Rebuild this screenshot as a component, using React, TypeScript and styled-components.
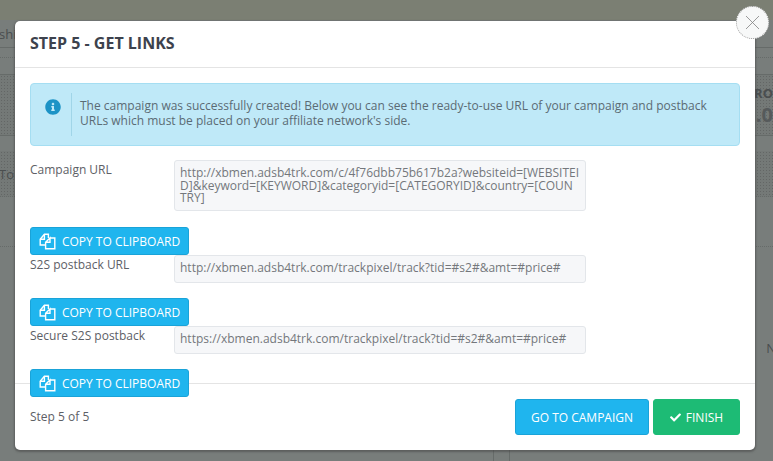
import { FaCheck, FaInfoCircle } from "react-icons/fa";
import styled, { createGlobalStyle } from "styled-components";

const GlobalStyle = createGlobalStyle`
	html, body {
		margin: 0;
		padding: 0;
		width: 773px;
		height: 461px;
		overflow: hidden;
		font-family: "Open Sans", "Liberation Sans", sans-serif;
	}
	* {
		box-sizing: border-box;
	}
`;

const Page = styled.div`
	position: relative;
	width: 773px;
	height: 461px;
	overflow: hidden;
	background: #787d7b;
`;

const Backdrop = styled.div`
	display: flex;
	flex-direction: column;
	height: 100%;
`;

const Band = styled.div<{ $h: number; $bg?: string; $line?: string; $dots?: boolean }>`
	flex: 0 0 ${(p) => p.$h}px;
	display: flex;
	justify-content: space-between;
	align-items: center;
	background-color: ${(p) => p.$bg || "transparent"};
	background-image: ${(p) => (p.$dots ? "radial-gradient(rgba(60, 60, 60, 0.3) 0.6px, transparent 0.8px)" : "none")};
	background-size: 3px 3px;
	border-bottom: ${(p) => (p.$line ? `1px ${p.$line} #666b69` : "none")};
	color: #4a4e4f;
	font-size: 13px;
	overflow: hidden;
`;

const BackText = styled.span<{ $left?: number | string; $right?: number }>`
	margin-left: ${(p) => (typeof p.$left === "string" ? p.$left : `${p.$left || 0}px`)};
	margin-right: ${(p) => p.$right || 0}px;
	white-space: nowrap;
`;

const BackStat = styled.div`
	margin-left: auto;
	padding-bottom: 2px;
	display: flex;
	flex-direction: column;
	align-items: flex-end;
	font-weight: 700;
	line-height: 22px;
	font-size: 13px;
`;

const BackValue = styled.span`
	font-size: 20px;
	color: #565a5b;
`;

const BottomRules = styled.div`
	flex: 1;
	width: 17px;
	margin-left: 493px;
	border-left: 1px solid #666b69;
	border-right: 1px solid #666b69;
`;

const Modal = styled.div`
	position: absolute;
	left: 15px;
	top: 21px;
	width: 740px;
	height: 429px;
	display: flex;
	flex-direction: column;
	background: #fff;
	border-radius: 5px;
	box-shadow: 0 1px 2px 1px rgba(70, 70, 70, 0.55);
`;

const Header = styled.div`
	flex: 0 0 47px;
	display: flex;
	align-items: center;
	padding: 0 15px 2px;
	border-bottom: 1px solid #e4e4e4;
`;

const Title = styled.h4`
	margin: 0;
	font-size: 16px;
	font-weight: 700;
	color: #3d424d;
	text-transform: uppercase;
`;

const CloseButton = styled.div`
	position: absolute;
	right: -14px;
	top: -15px;
	width: 33px;
	height: 33px;
	display: flex;
	align-items: center;
	justify-content: center;
	background: #f7f8f8;
	border: 1px dotted #9a9a9a;
	border-radius: 50%;
`;

const Body = styled.div`
	flex: 0 0 315px;
	min-height: 0;
	padding: 15px 15px 0;
	color: #5d6066;
	font-size: 12px;
`;

const Alert = styled.div`
	display: flex;
	align-items: stretch;
	height: 63px;
	margin-bottom: 14px;
	padding: 9px 0 9px 14px;
	background: #bfe9f8;
	border: 1px solid #a5def2;
	border-radius: 4px;
	color: #5b6b74;
`;

const AlertIcon = styled.div`
	flex: 0 0 27px;
	color: #1c93c6;
	font-size: 16px;
	line-height: 0;
	padding-top: 6px;
	border-right: 1px solid #a0d5e8;
`;

const AlertText = styled.div`
	padding: 5px 0 0 8px;
	line-height: 15px;
	white-space: nowrap;
`;

const Row = styled.div<{ $gap: number }>`
	display: flex;
	margin-bottom: ${(p) => p.$gap}px;
`;

const Label = styled.label`
	flex: 0 0 144px;
	padding-top: 1px;
	line-height: 18px;
`;

const Field = styled.div<{ $h: number }>`
	width: 412px;
	height: ${(p) => p.$h}px;
	padding: 6px 5px 0;
	background: #f6f7f9;
	border: 1px solid #e3e6ea;
	border-radius: 3px;
	color: #74777c;
	line-height: 12.5px;
	white-space: pre-line;
`;

const BlueButton = styled.button`
	display: inline-flex;
	align-items: center;
	justify-content: center;
	border: 1px solid #1aa3d8;
	border-radius: 3px;
	background: #1fb5ee;
	color: #fff;
	font-family: inherit;
	font-size: 12px;
	padding: 0;
`;

const CopyButton = styled(BlueButton)`
	position: relative;
	width: 159px;
	height: 28px;
	gap: 6px;
	vertical-align: top;
`;

const Footer = styled.div`
	flex: 1;
	display: flex;
	align-items: center;
	justify-content: space-between;
	padding: 0 15px;
	border-top: 1px solid #e4e4e4;
	color: #5d6066;
	font-size: 12px;
`;

const StepText = styled.span`
	padding-bottom: 2px;
`;

const FooterButtons = styled.div`
	display: flex;
	gap: 4px;
`;

const CampaignButton = styled(BlueButton)`
	width: 134px;
	height: 36px;
`;

const FinishButton = styled(BlueButton)`
	width: 87px;
	height: 36px;
	gap: 5px;
	background: #1dbb75;
	border-color: #1dbb75;
`;

function CopyIcon() {
	return (
		<svg width="17" height="17" viewBox="0 0 17 17" fill="none" stroke="#fff" strokeWidth="1.4">
			<path d="M6.5 12H1.2V6.2L5.4 1.2H9.4V5" />
			<path d="M5.4 1.6V6.2H1.4" />
			<path d="M11 5H15.8V15.8H6.6V9.2L11 5V9.2H6.6" />
		</svg>
	);
}

function CloseIcon() {
	return (
		<svg width="15" height="15" viewBox="0 0 15 15" stroke="#808080" strokeWidth="0.8">
			<path d="M1 1L14 14M14 1L1 14" />
		</svg>
	);
}

const fields = [
	{
		label: "Campaign URL",
		value:
			"http://xbmen.adsb4trk.com/c/4f76dbb75b617b2a?websiteid=[WEBSITEI\nD]&keyword=[KEYWORD]&categoryid=[CATEGORYID]&country=[COUN\nTRY]",
		height: 51,
		gap: 16,
	},
	{
		label: "S2S postback URL",
		value: "http://xbmen.adsb4trk.com/trackpixel/track?tid=#s2#&amt=#price#",
		height: 28,
		gap: 15,
	},
	{
		label: "Secure S2S postback",
		value: "https://xbmen.adsb4trk.com/trackpixel/track?tid=#s2#&amt=#price#",
		height: 28,
		gap: 15,
	},
];

function App() {
	return (
		<Page>
			<GlobalStyle />
			<Backdrop>
				<Band $h={20} $bg="#7b7f73" />
				<Band $h={28} $line="solid">
					<BackText $left={-1}>shi</BackText>
				</Band>
				<Band $h={10} $line="dotted" />
				<Band $h={17} $line="solid" />
				<Band $h={61} $bg="#747977" $dots $line="solid">
					<BackStat>
						<span>RO</span>
						<BackValue>.0</BackValue>
					</BackStat>
				</Band>
				<Band $h={15} />
				<Band $h={46} $bg="#747977" $dots $line="dotted">
					<BackText $left={-1}>To</BackText>
				</Band>
				<Band $h={50} $line="dotted" />
				<Band $h={202}>
					<BackText $left="auto" $right={-3}>
						N
					</BackText>
				</Band>
				<BottomRules />
			</Backdrop>
			<Modal>
				<Header>
					<Title>Step 5 - Get links</Title>
				</Header>
				<CloseButton>
					<CloseIcon />
				</CloseButton>
				<Body>
					<Alert>
						<AlertIcon>
							<FaInfoCircle />
						</AlertIcon>
						<AlertText>
							The campaign was successfully created! Below you can see the ready-to-use URL of your campaign and postback
							<br />
							URLs which must be placed on your affiliate network's side.
						</AlertText>
					</Alert>
					{fields.map((field) => (
						<div key={field.label}>
							<Row $gap={field.gap}>
								<Label>{field.label}</Label>
								<Field $h={field.height}>{field.value}</Field>
							</Row>
							<CopyButton>
								<CopyIcon />
								COPY TO CLIPBOARD
							</CopyButton>
						</div>
					))}
				</Body>
				<Footer>
					<StepText>Step 5 of 5</StepText>
					<FooterButtons>
						<CampaignButton>GO TO CAMPAIGN</CampaignButton>
						<FinishButton>
							<FaCheck size={11} />
							FINISH
						</FinishButton>
					</FooterButtons>
				</Footer>
			</Modal>
		</Page>
	);
}

export default App;
